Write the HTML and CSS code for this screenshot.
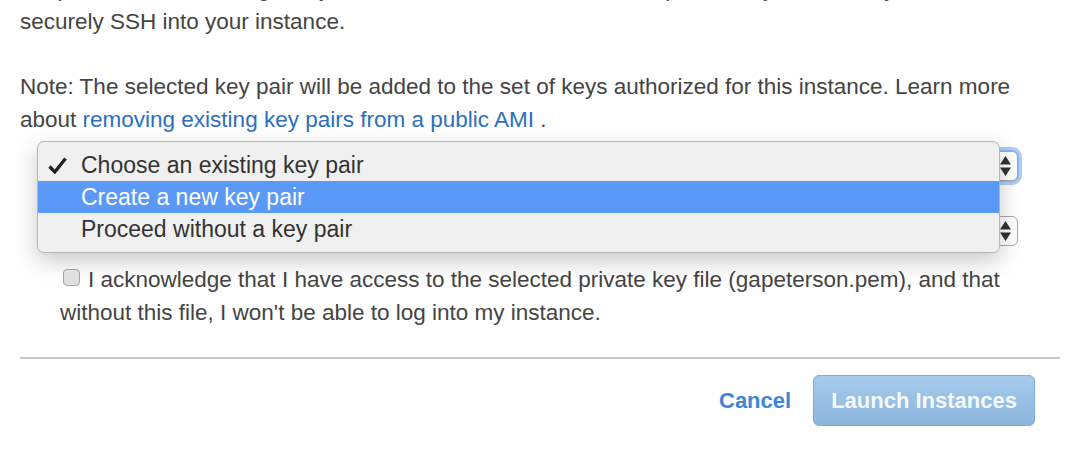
FILE: index.html
```html
<!DOCTYPE html>
<html>
<head>
<meta charset="utf-8">
<link rel="stylesheet" href="styles.css">
</head>
<body>
<div class="page">
  <p class="intro">the password used to log into your instance. For Linux AMIs, the private key file allows you to<br>securely SSH into your instance.</p>
  <p class="note">Note: The selected key pair will be added to the set of keys authorized for this instance. Learn more<br>about <a class="link" href="#">removing existing key pairs from a public AMI</a> .</p>
  <div class="selects">
    <div class="select focused">
      <svg class="arrows" width="11" height="20" viewBox="0 0 11 20"><path d="M0 8.5 L5.5 0 L11 8.5 Z M0 11.5 L5.5 20 L11 11.5 Z" fill="#333"/></svg>
    </div>
    <div class="select">
      <svg class="arrows" width="11" height="20" viewBox="0 0 11 20"><path d="M0 8.5 L5.5 0 L11 8.5 Z M0 11.5 L5.5 20 L11 11.5 Z" fill="#333"/></svg>
    </div>
    <div class="popup">
      <div class="opt"><svg class="check" width="19" height="17" viewBox="0 0 19 17"><path d="M1.5 9.5 L6.8 15 L17.5 1.5" fill="none" stroke="#222" stroke-width="3.3" stroke-linejoin="miter" stroke-linecap="butt"/></svg>Choose an existing key pair</div>
      <div class="opt active">Create a new key pair</div>
      <div class="opt">Proceed without a key pair</div>
    </div>
  </div>
  <label class="ack"><span class="cb"></span>I acknowledge that I have access to the selected private key file (gapeterson.pem), and that<br>without this file, I won't be able to log into my instance.</label>
  <hr class="rule">
  <div class="actions">
    <a class="cancel" href="#">Cancel</a>
    <button class="launch" type="button">Launch Instances</button>
  </div>
</div>
</body>
</html>
```

FILE: styles.css
```css
html, body {
  margin: 0;
  background: #fff;
}
body {
  font-family: "Liberation Sans", Arial, sans-serif;
  color: #444;
  overflow: hidden;
}
.page {
  padding: 0 16px 0 20px;
  height: 450px;
  overflow: hidden;
}
.page p {
  margin: 0 0 32px;
  font-size: 22.5px;
  line-height: 33px;
}
.page .intro {
  margin-top: -28px;
  white-space: nowrap;
}
.page .note {
  margin-bottom: 0;
}
.link {
  color: #2c6fbe;
  text-decoration: none;
}
.selects {
  position: relative;
  margin-top: 15px;
  padding-left: 21px;
}
.select {
  width: 977px;
  height: 30px;
  box-sizing: border-box;
  border: 1px solid #a9a9a9;
  border-radius: 6px;
  background: #fff;
  display: flex;
  justify-content: flex-end;
  align-items: center;
  padding-right: 6px;
}
.select.focused {
  box-shadow: 0 0 0 1px #8db8f2, 0 0 0 4px #afcdf7;
}
.select + .select {
  margin-top: 35px;
}
.popup {
  position: absolute;
  left: 17px;
  top: -10px;
  width: 963px;
  box-sizing: border-box;
  padding: 7px 0;
  border: 1px solid #b7b7b7;
  border-radius: 7px;
  background: #f0f0f0;
  box-shadow: 0 8px 22px rgba(0, 0, 0, 0.22);
  font-size: 23px;
  color: #333;
}
.opt {
  position: relative;
  height: 32px;
  line-height: 32px;
  padding-left: 43px;
}
.opt.active {
  background: #5b99f8;
  color: #fff;
}
.check {
  position: absolute;
  left: 10px;
  top: 8px;
}
.ack {
  display: block;
  margin-top: 17px;
  padding-left: 40px;
  font-size: 22.5px;
  line-height: 33px;
}
.cb {
  display: inline-block;
  width: 17px;
  height: 17px;
  box-sizing: border-box;
  border: 1px solid #a8a8a8;
  border-radius: 4px;
  background: linear-gradient(#ececec, #dcdcdc);
  margin: 0 8px 0 3px;
  vertical-align: 1px;
}
.rule {
  margin: 28px 0 0;
  border: 0;
  height: 2px;
  background: #c6c6c6;
}
.actions {
  display: flex;
  justify-content: flex-end;
  align-items: center;
  gap: 22px;
  margin-top: 16px;
  padding-right: 25px;
}
.cancel {
  font-weight: bold;
  font-size: 22px;
  color: #3d86d9;
  text-decoration: none;
}
.launch {
  height: 51px;
  padding: 0 17px;
  border: 1px solid #80acd6;
  border-radius: 6px;
  background: linear-gradient(#a6cced, #8bb4dc);
  color: rgba(255, 255, 255, 0.92);
  font-family: "Liberation Sans", Arial, sans-serif;
  font-weight: bold;
  font-size: 22px;
}
```
